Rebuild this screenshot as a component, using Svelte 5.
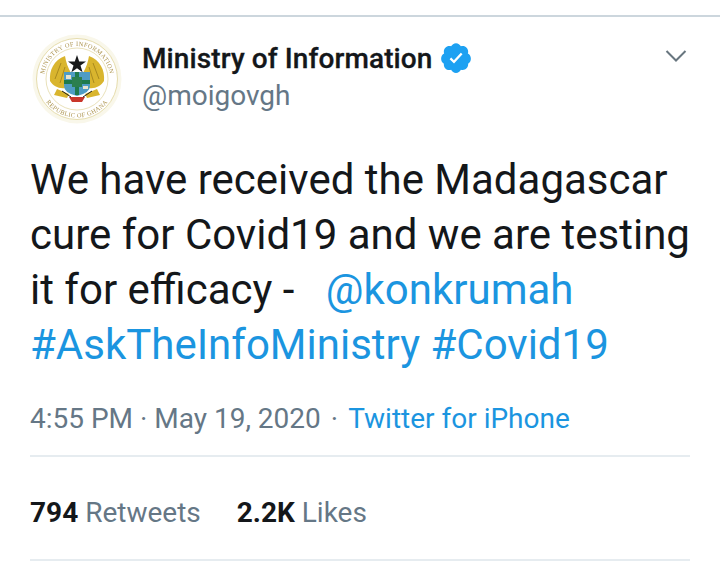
<script>
  const topRing = "MINISTRY OF INFORMATION";
  const bottomRing = "REPUBLIC OF GHANA";
</script>

<div class="page">
  <main class="tweet">
    <header class="head">
      <svg class="avatar" viewBox="0 0 90 90" aria-label="Ministry of Information seal">
        <defs>
          <path id="ringTop" d="M 12 45 A 33 33 0 0 1 78 45" />
          <path id="ringBottom" d="M 6.5 45 A 38.5 38.5 0 0 0 83.5 45" />
        </defs>
        <circle cx="45" cy="45" r="44.5" fill="#f9f7ea" />
        <circle cx="45" cy="45" r="40.5" fill="#fff" stroke="#e0d49b" stroke-width="0.8" />
        <circle cx="45" cy="45" r="31" fill="#fff" stroke="#e3d9a8" stroke-width="0.8" />
        <text class="ring"><textPath href="#ringTop" startOffset="50%" text-anchor="middle">{topRing}</textPath></text>
        <text class="ring"><textPath href="#ringBottom" startOffset="50%" text-anchor="middle">{bottomRing}</textPath></text>
        <path d="M33 22 C22 26 17 36 18 47 C21 52 27 55 33 54 C33 47 35 43 39 39 C36 34 34 28 33 22 Z" fill="#d9b52e" />
        <path d="M57 22 C68 26 73 36 72 47 C69 52 63 55 57 54 C57 47 55 43 51 39 C54 34 56 28 57 22 Z" fill="#d9b52e" />
        <path d="M29 29 L23 45 M33 33 L28 49 M61 29 L67 45 M57 33 L62 49" stroke="#a98a1e" stroke-width="1" fill="none" />
        <path d="M32 38 H58 V52 Q58 59 45 62 Q32 59 32 52 Z" fill="#4f9cc4" />
        <path d="M32 48 H58 M45 38 V61" stroke="#1f7a4d" stroke-width="4" />
        <rect x="40" y="43" width="10" height="10" fill="#2b7f4f" />
        <path d="M34 41 L39 41 L39 45 L34 45 Z M51 52 L56 52 L56 55 L51 55 Z" fill="#e9e4cf" />
        <path d="M45 21 L47.2 27.6 L54 27.6 L48.5 31.6 L50.6 38.2 L45 34.2 L39.4 38.2 L41.5 31.6 L36 27.6 L42.8 27.6 Z" fill="#17181a" />
        <path d="M25 55 L37 60 L35 64 L22 61 Z M65 55 L53 60 L55 64 L68 61 Z" fill="#d9b52e" />
        <path d="M37 63 H53 L50 68 H40 Z" fill="#c9362b" />
        <path d="M30 57 L39 63 M60 57 L51 63" stroke="#1e1e1e" stroke-width="1" />
      </svg>

      <div class="identity">
        <div class="name-row">
          <span class="name">Ministry of Information</span>
          <svg class="badge" viewBox="0 0 24 24" aria-label="Verified account">
            <path fill="#1da1f2" d="M22.5 12.5c0-1.58-.875-2.95-2.148-3.6.154-.435.238-.905.238-1.4 0-2.21-1.71-3.998-3.818-3.998-.47 0-.92.084-1.336.25C14.818 2.415 13.51 1.5 12 1.5s-2.816.917-3.437 2.25c-.415-.165-.866-.25-1.336-.25-2.11 0-3.818 1.79-3.818 4 0 .494.083.964.237 1.4-1.272.65-2.147 2.018-2.147 3.6 0 1.495.782 2.798 1.942 3.486-.02.17-.032.34-.032.514 0 2.21 1.708 4 3.818 4 .47 0 .92-.086 1.335-.25.62 1.334 1.926 2.25 3.437 2.25 1.512 0 2.818-.916 3.437-2.25.415.163.865.248 1.336.248 2.11 0 3.818-1.79 3.818-4 0-.174-.012-.344-.033-.513 1.158-.687 1.943-1.99 1.943-3.484z" />
            <path fill="#fff" d="M10.6 15.9 7.5 12.8l1.1-1.1 1.9 1.9 4.9-5.3 1.2 1.05z" />
          </svg>
        </div>
        <div class="handle">@moigovgh</div>
      </div>

      <svg class="chevron" viewBox="0 0 22 14" aria-hidden="true">
        <path d="M1.5 2 L11 11.5 L20.5 2" fill="none" stroke="#68767f" stroke-width="2" />
      </svg>
    </header>

    <p class="body">We have received the Madagascar cure for Covid19 and we are testing it for efficacy - <span class="gap"></span><span class="link">@konkrumah</span> <span class="link">#AskTheInfoMinistry</span> <span class="link">#Covid19</span></p>

    <div class="meta">
      <span>4:55 PM · May 19, 2020</span><span class="sep">·</span><span class="link">Twitter for iPhone</span>
    </div>

    <div class="stats">
      <span class="stat"><b>794</b> Retweets</span>
      <span class="stat"><b>2.2K</b> Likes</span>
    </div>
  </main>
</div>

<style>
  :global(body) {
    margin: 0;
    background: #fff;
  }

  .page {
    width: 720px;
    height: 561px;
    box-sizing: border-box;
    overflow: hidden;
    background: #fff;
    font-family: Roboto, "Liberation Sans", sans-serif;
    color: #14171a;
  }

  .tweet {
    margin-top: 15px;
    border-top: 2px solid #ccd6dd;
    padding: 15px 30px 0;
    height: 544px;
  }

  .head {
    display: flex;
    align-items: flex-start;
  }

  .avatar {
    width: 90px;
    height: 90px;
    flex: none;
    margin: 2px 20px 0 2px;
    filter: blur(0.35px);
  }

  .ring {
    font-family: "Liberation Serif", serif;
    font-size: 6.4px;
    letter-spacing: 0.35px;
    fill: #ad9550;
  }

  .identity {
    flex: 1;
    padding-top: 8px;
  }

  .name-row {
    display: flex;
    align-items: center;
    gap: 6px;
    height: 36px;
  }

  .name {
    font-size: 28px;
    font-weight: 500;
    letter-spacing: 0.1px;
    -webkit-text-stroke: 0.3px #14171a;
  }

  .badge {
    width: 34px;
    height: 34px;
  }

  .handle {
    font-size: 28px;
    line-height: 36px;
    margin-top: 2px;
    color: #657786;
  }

  .chevron {
    width: 22px;
    height: 14px;
    margin: 17px 3px 0 0;
  }

  .body {
    margin: 28px 0 0;
    font-size: 42px;
    line-height: 55px;
    width: 680px;
  }

  .gap {
    display: inline-block;
    width: 21px;
  }

  .link {
    color: #1b95e0;
  }

  .meta {
    margin-top: 29px;
    padding-bottom: 18px;
    border-bottom: 2px solid #e6ecf0;
    font-size: 28px;
    line-height: 36px;
    color: #657786;
  }

  .sep {
    margin: 0 10px;
  }

  .stats {
    display: flex;
    gap: 36px;
    padding: 38px 0 28px;
    border-bottom: 2px solid #e6ecf0;
    font-size: 28px;
    line-height: 36px;
    color: #657786;
  }

  .stat b {
    font-weight: 700;
    color: #14171a;
  }
</style>
